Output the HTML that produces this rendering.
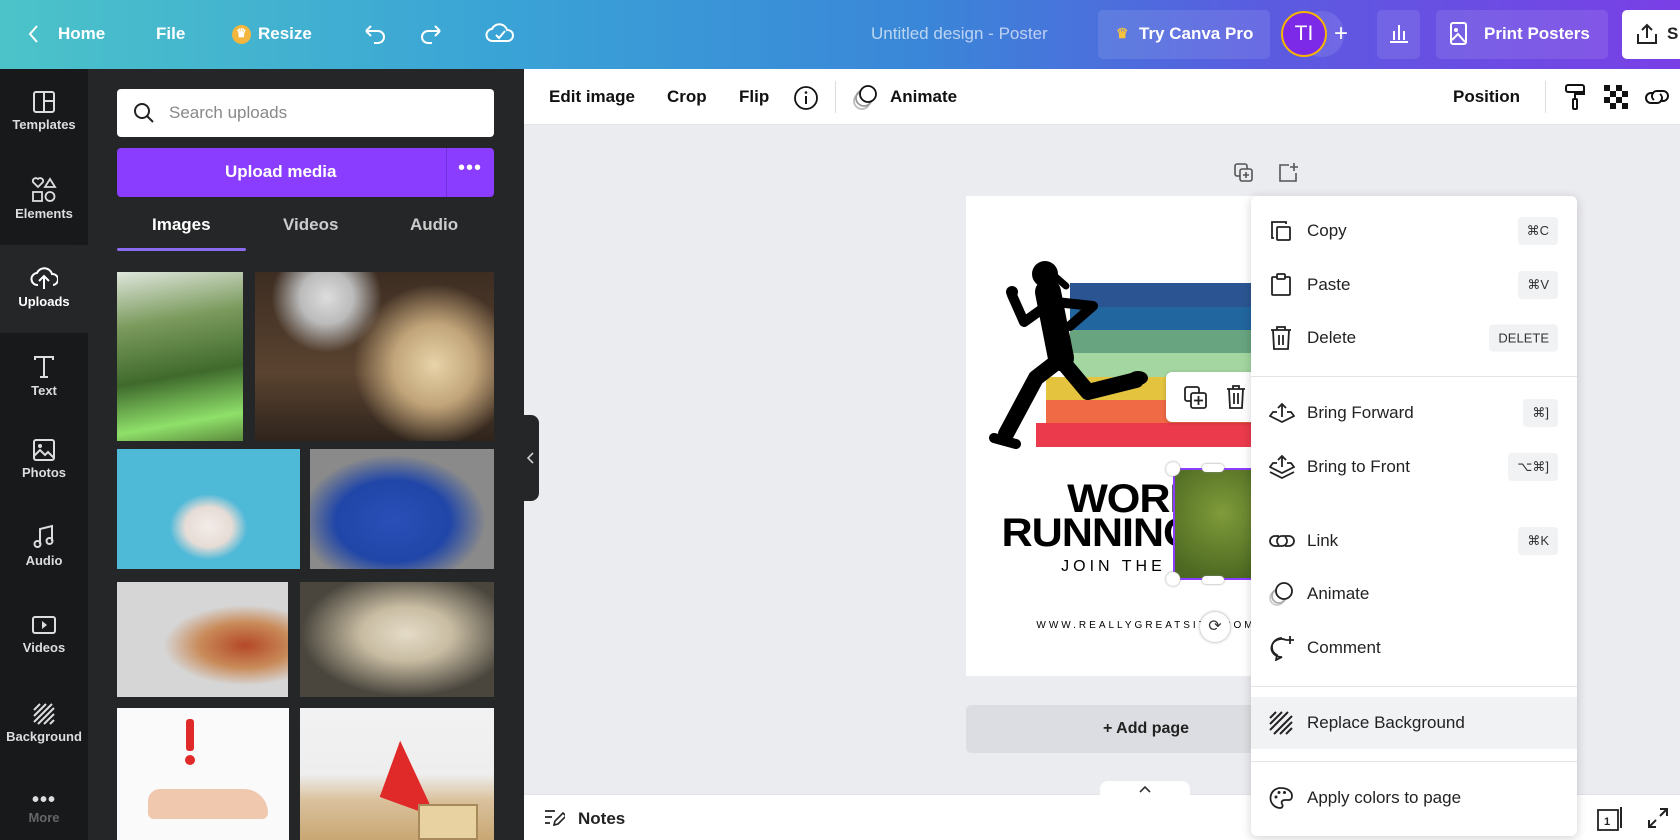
<!DOCTYPE html>
<html><head><meta charset="utf-8"><style>
*{box-sizing:border-box;margin:0;padding:0}
body{width:1680px;height:840px;overflow:hidden;position:relative;font-family:"Liberation Sans",sans-serif;background:#ebecf0}
.a{position:absolute}
.top{left:0;top:0;width:1680px;height:69px;background:linear-gradient(90deg,#4cc3c9 0%,#3aa3d6 30%,#3a86d8 55%,#5a5ce0 75%,#7a3fe6 100%);color:#fff;font-size:17px;font-weight:bold}
.top .t{position:absolute;top:24px}
.rail{left:0;top:69px;width:88px;height:771px;background:#18191b}
.ri{position:absolute;left:0;width:88px;text-align:center;color:#ddd;font-size:13px;font-weight:bold}
.panel{left:88px;top:69px;width:436px;height:771px;background:#252627}
.tool{left:524px;top:69px;width:1156px;height:56px;background:#fff;border-bottom:1px solid #e3e4e8;font-size:17px;font-weight:bold;color:#111}
.tool span{position:absolute;top:18px}
.menu{left:1251px;top:196px;width:326px;height:640px;background:#fff;border-radius:6px;box-shadow:0 2px 10px rgba(0,0,0,.18)}
.mi{position:absolute;left:56px;font-size:17px;color:#222;transform:translateY(-50%)}
.ic{position:absolute;left:18px;transform:translateY(-50%)}
.kb{position:absolute;right:19px;transform:translateY(-50%);background:#f1f2f4;border-radius:4px;font-size:13px;color:#333;padding:6px 9px}
.dv{position:absolute;left:0;width:326px;height:1px;background:#e2e3e6}
</style></head><body>

<div class="a top">
 <svg class="a" style="left:28px;top:24px" width="12" height="20"><path d="M9 2L2 10l7 8" stroke="#fff" stroke-width="2" fill="none"/></svg>
 <span class="t" style="left:58px">Home</span>
 <span class="t" style="left:156px">File</span>
 <div class="a" style="left:232px;top:25px;width:19px;height:19px;border-radius:50%;background:#f4b63d"></div>
 <span class="a" style="left:236px;top:26px;font-size:12px;color:#fff">♛</span>
 <span class="t" style="left:258px">Resize</span>
 <svg class="a" style="left:362px;top:22px" width="26" height="24"><path d="M4 9h12a6 6 0 010 12h-4M4 9l5-5M4 9l5 5" stroke="#fff" stroke-width="2" fill="none"/></svg>
 <svg class="a" style="left:418px;top:22px" width="26" height="24"><path d="M22 9H10a6 6 0 000 12h4M22 9l-5-5M22 9l-5 5" stroke="#fff" stroke-width="2" fill="none"/></svg>
 <svg class="a" style="left:485px;top:20px" width="30" height="26"><path d="M8 21a6 6 0 01-1-12 8 8 0 0115 1 5 5 0 011 11z" stroke="#fff" stroke-width="2" fill="none"/><path d="M11 15l3 3 6-7" stroke="#fff" stroke-width="2" fill="none"/></svg>
 <span class="t" style="left:871px;font-weight:normal;color:rgba(255,255,255,.65)">Untitled design - Poster</span>
 <div class="a" style="left:1098px;top:10px;width:172px;height:49px;background:rgba(255,255,255,.1);border-radius:5px"></div>
 <span class="a" style="left:1116px;top:25px;font-size:14px;color:#f7c23c">♛</span>
 <span class="t" style="left:1139px">Try Canva Pro</span>
 <div class="a" style="left:1300px;top:11px;width:44px;height:46px;border-radius:23px;background:rgba(255,255,255,.1)"></div>
 <div class="a" style="left:1281px;top:11px;width:46px;height:46px;border-radius:50%;background:#7d2ae8;border:2px solid #f5b400;text-align:center;line-height:42px;font-size:21px;font-weight:normal">TI</div>
 <span class="t" style="left:1334px;top:20px;font-size:24px;font-weight:normal">+</span>
 <div class="a" style="left:1377px;top:10px;width:43px;height:49px;background:rgba(255,255,255,.1);border-radius:5px"></div>
 <svg class="a" style="left:1388px;top:22px" width="22" height="22"><path d="M2 20h18M6 18V9M11 18V3M16 18V9" stroke="#fff" stroke-width="2"/></svg>
 <div class="a" style="left:1436px;top:10px;width:172px;height:49px;background:rgba(255,255,255,.1);border-radius:5px"></div>
 <svg class="a" style="left:1450px;top:22px" width="18" height="24"><rect x="1" y="1" width="15" height="21" rx="2" stroke="#fff" stroke-width="2" fill="none"/><circle cx="6" cy="8" r="2" fill="#fff"/><path d="M2 18l6-6 7 8" stroke="#fff" stroke-width="2" fill="none"/></svg>
 <span class="t" style="left:1484px">Print Posters</span>
 <div class="a" style="left:1622px;top:10px;width:70px;height:49px;background:#fff;border-radius:5px"></div>
 <svg class="a" style="left:1636px;top:22px" width="22" height="24"><path d="M2 12v9h18v-9M11 16V3M6 8l5-5 5 5" stroke="#222" stroke-width="2" fill="none"/></svg>
 <span class="t" style="left:1667px;color:#222">S</span>
</div>

<div class="a rail">
 <div class="a" style="left:0;top:176px;width:88px;height:88px;background:#252627"></div>
 <div class="a" style="left:0;top:0;width:88px;height:176px;background:#18191b;border-radius:0 0 12px 0"></div>
 <div class="a" style="left:0;top:264px;width:88px;height:507px;background:#18191b;border-radius:0 12px 0 0"></div>
</div>
<div class="ri" style="top:90px"><svg width="24" height="24"><rect x="2" y="2" width="20" height="20" rx="2" stroke="#ddd" stroke-width="2" fill="none"/><path d="M12 2v20M12 11h10" stroke="#ddd" stroke-width="2"/></svg><br>Templates</div>
<div class="ri" style="top:177px"><svg width="26" height="26"><path d="M7 10L2 5a3 3 0 015-3 3 3 0 015 3z" stroke="#ddd" stroke-width="1.8" fill="none"/><path d="M19 2l5 8h-10z" stroke="#ddd" stroke-width="1.8" fill="none"/><rect x="2" y="15" width="9" height="9" stroke="#ddd" stroke-width="1.8" fill="none"/><circle cx="19" cy="19.5" r="4.5" stroke="#ddd" stroke-width="1.8" fill="none"/></svg><br>Elements</div>
<div class="ri" style="top:265px;color:#fff"><svg width="28" height="26"><path d="M8 20a6 6 0 01-1-12 8 8 0 0115 1 5 5 0 011 11M14 24V12M9 16l5-5 5 5" stroke="#fff" stroke-width="2" fill="none"/></svg><br>Uploads</div>
<div class="ri" style="top:354px"><svg width="24" height="26"><path d="M3 6V3h18v3M12 3v20M8 23h8" stroke="#ddd" stroke-width="2" fill="none"/></svg><br>Text</div>
<div class="ri" style="top:438px"><svg width="24" height="24"><rect x="2" y="2" width="20" height="20" rx="2" stroke="#ddd" stroke-width="2" fill="none"/><circle cx="8" cy="8" r="2" fill="#ddd"/><path d="M2 18l6-6 5 5 3-3 6 6" stroke="#ddd" stroke-width="2" fill="none"/></svg><br>Photos</div>
<div class="ri" style="top:524px"><svg width="24" height="26"><path d="M8 20V5l12-3v15" stroke="#ddd" stroke-width="2" fill="none"/><circle cx="5.5" cy="20" r="3" stroke="#ddd" stroke-width="2" fill="none"/><circle cx="17.5" cy="17" r="3" stroke="#ddd" stroke-width="2" fill="none"/></svg><br>Audio</div>
<div class="ri" style="top:615px"><svg width="26" height="22"><rect x="2" y="2" width="22" height="16" rx="2" stroke="#ddd" stroke-width="2" fill="none"/><path d="M11 6l5 4-5 4z" fill="#ddd"/></svg><br>Videos</div>
<div class="ri" style="top:702px"><svg width="24" height="24"><path d="M2 8L8 2M2 14L14 2M2 20L20 2M6 22L22 6M12 22l10-10M18 22l4-4" stroke="#ddd" stroke-width="2"/></svg><br>Background</div>
<div class="ri" style="top:790px;color:#666"><div style="color:#ddd;font-size:20px;letter-spacing:1px;line-height:20px">•••</div>More</div>

<div class="a panel">
 <div class="a" style="left:29px;top:20px;width:377px;height:48px;background:#fff;border-radius:4px"></div>
 <svg class="a" style="left:45px;top:33px" width="22" height="22"><circle cx="9" cy="9" r="7" stroke="#222" stroke-width="2" fill="none"/><path d="M14 14l6 6" stroke="#222" stroke-width="2"/></svg>
 <span class="a" style="left:81px;top:34px;font-size:17px;color:#888">Search uploads</span>
 <div class="a" style="left:29px;top:79px;width:377px;height:49px;background:#8b3dff;border-radius:4px"></div>
 <div class="a" style="left:358px;top:79px;width:1px;height:49px;background:#7230d8"></div>
 <span class="a" style="left:137px;top:93px;font-size:17px;font-weight:bold;color:#fff">Upload media</span>
 <span class="a" style="left:370px;top:88px;font-size:20px;color:#fff;letter-spacing:1px">•••</span>
 <span class="a" style="left:64px;top:146px;font-size:17px;font-weight:bold;color:#fff">Images</span>
 <span class="a" style="left:195px;top:146px;font-size:17px;font-weight:bold;color:#ccc">Videos</span>
 <span class="a" style="left:322px;top:146px;font-size:17px;font-weight:bold;color:#ccc">Audio</span>
 <div class="a" style="left:29px;top:179px;width:129px;height:3px;background:#8b6cf0;border-radius:2px"></div>
 <div class="a" style="left:29px;top:203px;width:126px;height:169px;background:linear-gradient(170deg,#dfe6dc 0%,#7a9a5c 30%,#3f6a2c 60%,#8fe06a 85%,#5b8a3c 100%)"></div>
 <div class="a" style="left:167px;top:203px;width:239px;height:169px;background:radial-gradient(circle at 30% 15%,#ddd 0,#bbb 12%,transparent 25%),radial-gradient(circle at 75% 55%,#e8d3a8 0,#c2a57a 20%,transparent 40%),linear-gradient(180deg,#3d2d22,#5a4330 60%,#2f241c)"></div>
 <div class="a" style="left:29px;top:380px;width:183px;height:120px;background:radial-gradient(ellipse at 50% 65%,#f2ece8 0,#e7dcd6 18%,transparent 30%),#4fb9d8"></div>
 <div class="a" style="left:222px;top:380px;width:184px;height:120px;background:radial-gradient(ellipse at 45% 60%,#2a4fb8 0,#2046a8 40%,transparent 65%),#8a8a8a"></div>
 <div class="a" style="left:29px;top:513px;width:171px;height:115px;background:radial-gradient(ellipse at 75% 55%,#b44828 0,#c98a58 25%,transparent 45%),#d6d6d6"></div>
 <div class="a" style="left:212px;top:513px;width:194px;height:115px;background:radial-gradient(ellipse at 55% 45%,#e5dcc8 0,#c8bca2 30%,#4a463e 70%),#3a3732"></div>
 <div class="a" style="left:29px;top:639px;width:172px;height:132px;background:#fafafa"></div>
 <div class="a" style="left:212px;top:639px;width:194px;height:132px;background:linear-gradient(180deg,#f2f2f2 0%,#eee 50%,#d9c19c 70%,#c9a774 100%)"></div>
 <div class="a" style="left:98px;top:650px;width:8px;height:32px;background:#e02a2a;border-radius:3px"></div>
 <div class="a" style="left:97px;top:686px;width:10px;height:10px;background:#e02a2a;border-radius:50%"></div>
 <div class="a" style="left:60px;top:720px;width:120px;height:30px;background:#f0c8ae;border-radius:20px 40px 10px 10px"></div>
 <div class="a" style="left:300px;top:680px;width:60px;height:60px;background:#e02a2a;transform:rotate(20deg);clip-path:polygon(0 0,100% 100%,0 100%)"></div>
 <div class="a" style="left:330px;top:735px;width:60px;height:36px;background:#e8d2a2;border:2px solid #a88a5a"></div>
</div>
<div class="a" style="left:524px;top:415px;width:15px;height:86px;background:#252627;border-radius:0 8px 8px 0"></div>
<svg class="a" style="left:526px;top:452px" width="10" height="12"><path d="M7 1L2 6l5 5" stroke="#ccc" stroke-width="1.6" fill="none"/></svg>

<div class="a tool">
 <span style="left:25px">Edit image</span>
 <span style="left:143px">Crop</span>
 <span style="left:215px">Flip</span>
 <svg class="a" style="left:269px;top:16px" width="26" height="26"><circle cx="13" cy="13" r="11" stroke="#111" stroke-width="1.8" fill="none"/><path d="M13 11v8" stroke="#111" stroke-width="2"/><circle cx="13" cy="7.5" r="1.3" fill="#111"/></svg>
 <div class="a" style="left:311px;top:12px;width:1px;height:32px;background:#ddd"></div>
 <svg class="a" style="left:328px;top:14px" width="28" height="28"><circle cx="10" cy="18" r="8" stroke="#bbb" stroke-width="1.8" fill="none"/><circle cx="12" cy="15" r="8" stroke="#999" stroke-width="1.8" fill="none"/><circle cx="16" cy="11" r="8" stroke="#111" stroke-width="1.8" fill="#fff"/></svg>
 <span style="left:366px">Animate</span>
 <span style="left:929px">Position</span>
 <div class="a" style="left:1021px;top:12px;width:1px;height:32px;background:#ddd"></div>
 <svg class="a" style="left:1040px;top:14px" width="22" height="28"><rect x="2" y="2" width="18" height="7" rx="2" stroke="#111" stroke-width="2" fill="none"/><path d="M20 6v5H11v5" stroke="#111" stroke-width="2" fill="none"/><rect x="9" y="16" width="4" height="10" rx="1" stroke="#111" stroke-width="2" fill="none"/></svg>
 <svg class="a" style="left:1080px;top:16px" width="24" height="24"><path d="M0 0h6v6H0zM12 0h6v6h-6zM6 6h6v6H6zM18 6h6v6h-6zM0 12h6v6H0zM12 12h6v6h-6zM6 18h6v6H6zM18 18h6v6h-6z" fill="#111"/></svg>
 <svg class="a" style="left:1120px;top:17px" width="26" height="22"><path d="M10 7H7a5 5 0 000 10h6a5 5 0 003-9M16 15h3a5 5 0 000-10h-6a5 5 0 00-3 9" stroke="#111" stroke-width="2" fill="none"/></svg>
</div>

<svg class="a" style="left:1234px;top:163px" width="20" height="20"><rect x="1" y="1" width="12" height="12" rx="2" stroke="#555" stroke-width="1.6" fill="none"/><rect x="6" y="6" width="12" height="12" rx="2" stroke="#555" stroke-width="1.6" fill="#ebecf0"/><path d="M12 9v6M9 12h6" stroke="#555" stroke-width="1.6"/></svg>
<svg class="a" style="left:1277px;top:162px" width="22" height="22"><path d="M12 3H3v16h16v-8" stroke="#555" stroke-width="1.6" fill="none"/><path d="M17 1v8M13 5h8" stroke="#555" stroke-width="1.6"/></svg>

<!-- poster -->
<div class="a" style="left:966px;top:196px;width:360px;height:480px;background:#fff;overflow:hidden">
 <div class="a" style="left:104px;top:87px;width:260px;height:24px;background:#2b5592"></div>
 <div class="a" style="left:104px;top:111px;width:260px;height:23px;background:#22669f"></div>
 <div class="a" style="left:104px;top:134px;width:260px;height:23px;background:#68a47f"></div>
 <div class="a" style="left:104px;top:157px;width:260px;height:24px;background:#a3d6a1"></div>
 <div class="a" style="left:80px;top:181px;width:284px;height:23px;background:#e4c33f"></div>
 <div class="a" style="left:80px;top:204px;width:284px;height:23px;background:#ef6a45"></div>
 <div class="a" style="left:70px;top:227px;width:294px;height:24px;background:#eb3a4c"></div>
 <svg class="a" style="left:0;top:0" width="200" height="270">
  <g stroke="#000" fill="none" stroke-linecap="round" stroke-linejoin="round">
   <path d="M82 96L95 162" stroke-width="26"/>
   <path d="M86 106L58 126L46 99" stroke-width="10"/>
   <path d="M90 106L127 110L104 130" stroke-width="10"/>
   <path d="M96 165L122 196L170 184" stroke-width="16"/>
   <path d="M92 165L70 182L40 238" stroke-width="16"/>
   <path d="M28 242L50 248" stroke-width="10"/>
   <path d="M84 76L100 90" stroke-width="7"/>
  </g>
  <circle cx="79" cy="78" r="13" fill="#000"/>
  <ellipse cx="172" cy="182" rx="10" ry="7" fill="#000"/>
  <circle cx="46" cy="96" r="6" fill="#000"/>
 </svg>
 <div class="a" style="left:200px;top:176px;width:160px;height:50px;background:#fff;border-radius:6px;box-shadow:0 1px 4px rgba(0,0,0,.2)"></div>
 <svg class="a" style="left:218px;top:190px" width="24" height="24"><rect x="1" y="1" width="14" height="14" rx="2" stroke="#222" stroke-width="1.8" fill="none"/><rect x="7" y="7" width="15" height="15" rx="2" stroke="#222" stroke-width="1.8" fill="#fff"/><path d="M14.5 10v9M10 14.5h9" stroke="#222" stroke-width="1.8"/></svg>
 <svg class="a" style="left:259px;top:188px" width="22" height="26"><path d="M2 5h18M8 5V2h6v3M4 5l1 19h12l1-19M9 9v11M13 9v11" stroke="#222" stroke-width="1.8" fill="none"/></svg>
 <div class="a" style="left:-20px;top:286px;width:400px;text-align:center;font-size:40px;font-weight:900;letter-spacing:-1px;line-height:34px;color:#000;transform:scaleX(1.08)">WORLD<br>RUNNING DAY</div>
 <div class="a" style="left:0;top:362px;width:350px;text-align:center;font-size:16px;letter-spacing:4px;color:#000">JOIN THE RUN</div>
 <div class="a" style="left:0;top:424px;width:360px;text-align:center;font-size:10px;letter-spacing:3px;color:#000">WWW.REALLYGREATSITE.COM</div>
 <div class="a" style="left:207px;top:272px;width:160px;height:112px;background:radial-gradient(circle at 30% 40%,#7f9b3a,#4f6b22 50%,#3a5218);border:2px solid #8b3dff"></div>
 <div class="a" style="left:200px;top:266px;width:14px;height:14px;border-radius:50%;background:#fff;box-shadow:0 0 2px #888"></div>
 <div class="a" style="left:200px;top:376px;width:14px;height:14px;border-radius:50%;background:#fff;box-shadow:0 0 2px #888"></div>
 <div class="a" style="left:236px;top:268px;width:22px;height:8px;border-radius:4px;background:#fff;box-shadow:0 0 2px #888"></div>
 <div class="a" style="left:236px;top:380px;width:22px;height:8px;border-radius:4px;background:#fff;box-shadow:0 0 2px #888"></div>
 <div class="a" style="left:234px;top:416px;width:30px;height:30px;border-radius:50%;background:#fff;box-shadow:0 0 3px #999;text-align:center;line-height:30px;font-size:16px;color:#333">⟳</div>
</div>

<div class="a" style="left:966px;top:705px;width:360px;height:48px;background:#dcdde2;border-radius:5px;text-align:center;line-height:48px;font-size:16px;font-weight:bold;color:#222">+ Add page</div>

<div class="a" style="left:524px;top:794px;width:1156px;height:46px;background:#fff;border-top:1px solid #e3e4e8"></div>
<div class="a" style="left:1100px;top:781px;width:90px;height:14px;background:#fff;border-radius:8px 8px 0 0"></div>
<svg class="a" style="left:1139px;top:785px" width="12" height="8"><path d="M1 7l5-5 5 5" stroke="#333" stroke-width="1.6" fill="none"/></svg>
<svg class="a" style="left:543px;top:808px" width="22" height="20"><path d="M2 3h10M2 9h7M2 15h5" stroke="#222" stroke-width="1.8"/><path d="M11 17l1-4 8-8 3 3-8 8z" stroke="#222" stroke-width="1.6" fill="none"/></svg>
<span class="a" style="left:578px;top:809px;font-size:17px;font-weight:bold;color:#222">Notes</span>
<svg class="a" style="left:1596px;top:804px" width="28" height="28"><rect x="2" y="6" width="20" height="20" stroke="#222" stroke-width="1.8" fill="#fff"/><path d="M25 3v21" stroke="#222" stroke-width="2"/><text x="8" y="21" font-size="11" font-family="Liberation Sans" font-weight="bold" fill="#222">1</text></svg>
<svg class="a" style="left:1646px;top:806px" width="24" height="24"><path d="M14 3h7v7M21 3l-7 7M10 21H3v-7M3 21l7-7" stroke="#222" stroke-width="2" fill="none"/></svg>

<div class="a menu">
 <svg class="ic" style="top:35px" width="24" height="24"><path d="M5 19H3V3h14v2" stroke="#222" stroke-width="1.8" fill="none"/><rect x="8" y="8" width="13" height="13" rx="1" stroke="#222" stroke-width="1.8" fill="none"/></svg>
 <span class="mi" style="top:35px">Copy</span><span class="kb" style="top:35px">⌘C</span>
 <svg class="ic" style="top:89px" width="24" height="24"><rect x="3" y="4" width="18" height="18" rx="1" stroke="#222" stroke-width="1.8" fill="none"/><rect x="8" y="1" width="8" height="5" rx="1" stroke="#222" stroke-width="1.8" fill="#fff"/></svg>
 <span class="mi" style="top:89px">Paste</span><span class="kb" style="top:89px">⌘V</span>
 <svg class="ic" style="top:142px" width="24" height="26"><path d="M2 5h20M8 5V2h8v3M4 5l1 19h14l1-19M10 10v10M14 10v10" stroke="#222" stroke-width="1.8" fill="none"/></svg>
 <span class="mi" style="top:142px">Delete</span><span class="kb" style="top:142px">DELETE</span>
 <div class="dv" style="top:180px"></div>
 <svg class="ic" style="top:217px" width="26" height="22"><path d="M13 15V2M9 6l4-4 4 4M8 10H4l-3 4 12 6 12-6-3-4h-4" stroke="#222" stroke-width="1.8" fill="none"/></svg>
 <span class="mi" style="top:217px">Bring Forward</span><span class="kb" style="top:217px">⌘]</span>
 <svg class="ic" style="top:271px" width="26" height="26"><path d="M13 13V2M9 6l4-4 4 4M8 9H4l-3 4 12 6 12-6-3-4h-4M1 18l12 6 12-6" stroke="#222" stroke-width="1.8" fill="none"/></svg>
 <span class="mi" style="top:271px">Bring to Front</span><span class="kb" style="top:271px">⌥⌘]</span>
 <svg class="ic" style="top:345px" width="26" height="22"><path d="M10 6H6a5 5 0 000 10h7a5 5 0 003-9M16 16h4a5 5 0 000-10h-7a5 5 0 00-3 9" stroke="#222" stroke-width="1.8" fill="none"/></svg>
 <span class="mi" style="top:345px">Link</span><span class="kb" style="top:345px">⌘K</span>
 <svg class="ic" style="top:398px" width="26" height="26"><circle cx="8" cy="17" r="7" stroke="#ccc" stroke-width="1.8" fill="none"/><circle cx="10" cy="15" r="7" stroke="#aaa" stroke-width="1.8" fill="none"/><circle cx="15" cy="10" r="8" stroke="#222" stroke-width="1.8" fill="#fff"/></svg>
 <span class="mi" style="top:398px">Animate</span>
 <svg class="ic" style="top:452px" width="26" height="26"><path d="M17 5a10 9 0 10-4 17l-6 3 1-5a10 9 0 01-5-8 10 9 0 0110-9" stroke="#222" stroke-width="1.8" fill="none"/><path d="M21 1v8M17 5h8" stroke="#222" stroke-width="1.8"/></svg>
 <span class="mi" style="top:452px">Comment</span>
 <div class="dv" style="top:490px"></div>
 <div class="a" style="left:0;top:501px;width:326px;height:52px;background:#f1f2f4"></div>
 <svg class="ic" style="top:527px" width="24" height="24"><path d="M1 7L7 1M1 13L13 1M1 19L19 1M5 23L23 5M11 23L23 11M17 23l6-6" stroke="#222" stroke-width="2"/></svg>
 <span class="mi" style="top:527px">Replace Background</span>
 <div class="dv" style="top:565px"></div>
 <svg class="ic" style="top:602px" width="26" height="24"><path d="M12 2a10 10 0 00-1 20c3 0 3-3 2-4-1-2 0-4 3-4h4c2 0 3-2 3-4C23 5 18 2 12 2z" stroke="#222" stroke-width="1.8" fill="none"/><circle cx="7" cy="11" r="1.5" fill="#222"/><circle cx="10" cy="6.5" r="1.5" fill="#222"/><circle cx="15.5" cy="6.5" r="1.5" fill="#222"/></svg>
 <span class="mi" style="top:602px">Apply colors to page</span>
</div>
</body></html>
